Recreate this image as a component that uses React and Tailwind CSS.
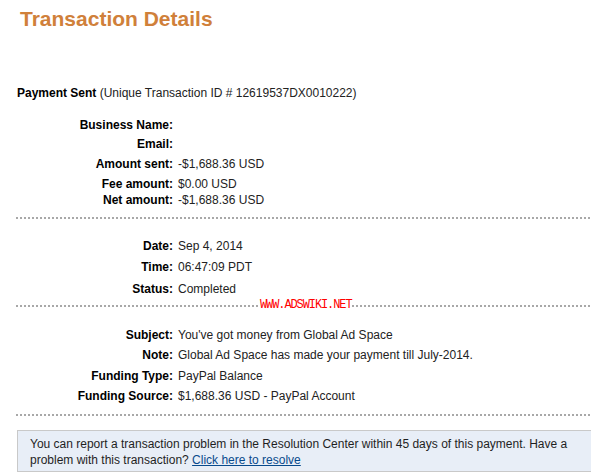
import React from "react";

function Row({ label, value, className }) {
  return (
    <div className={"flex leading-4 " + className}>
      <div className="w-[173px] shrink-0 text-right font-bold text-black">{label}</div>
      <div className="pl-[5px] text-[#222]">{value}</div>
    </div>
  );
}

function Dots({ className, children }) {
  return (
    <div className={"relative ml-4 h-[2px] bg-[repeating-linear-gradient(90deg,#a8a8a8_0_2px,transparent_2px_4px)] " + className}>
      {children}
    </div>
  );
}

export default function App() {
  return (
    <div className="w-[591px] h-[472px] overflow-hidden bg-white text-[12px] font-['Liberation_Sans',Arial,sans-serif]">
      <h1 className="pl-5 pt-[7px] text-[21px] leading-6 font-bold text-[#d0803a]">Transaction Details</h1>

      <p className="mt-[54px] pl-[17px] leading-4 text-[#222]">
        <span className="font-bold text-black">Payment Sent</span> (Unique Transaction ID # 12619537DX0010222)
      </p>

      <Row className="mt-4" label="Business Name:" value="" />
      <Row className="mt-[3px]" label="Email:" value="" />
      <Row className="mt-1" label="Amount sent:" value="-$1,688.36 USD" />
      <Row className="mt-1" label="Fee amount:" value="$0.00 USD" />
      <Row className="mt-0" label="Net amount:" value="-$1,688.36 USD" />

      <Dots className="mt-[9px]" />

      <Row className="mt-[19px]" label="Date:" value="Sep 4, 2014" />
      <Row className="mt-[5px]" label="Time:" value="06:47:09 PDT" />
      <Row className="mt-[6px]" label="Status:" value="Completed" />

      <Dots className="mt-[8px]">
        <span className="absolute left-[244px] -top-[7px] bg-white text-[12px] leading-[15px] text-[#ff0000] font-['Liberation_Mono',monospace] tracking-[-1.1px]">
          WWW.ADSWIKI.NET
        </span>
      </Dots>

      <Row className="mt-[20px]" label="Subject:" value="You've got money from Global Ad Space" />
      <Row className="mt-1" label="Note:" value="Global Ad Space has made your payment till July-2014." />
      <Row className="mt-[5px]" label="Funding Type:" value="PayPal Balance" />
      <Row className="mt-1" label="Funding Source:" value="$1,688.36 USD - PayPal Account" />

      <Dots className="mt-[10px]" />

      <div className="mt-[14px] ml-[17px] w-[600px] border border-[#c9c9c9] bg-[#e8eef7] pl-3 pr-5 pt-[5px] pb-[3px] leading-4 text-[#1f1f1f]">
        You can report a transaction problem in the Resolution Center within 45 days of this payment. Have a problem with this
        transaction? <a href="#" className="text-[#084a8c] underline">Click here to resolve</a>
      </div>
    </div>
  );
}
